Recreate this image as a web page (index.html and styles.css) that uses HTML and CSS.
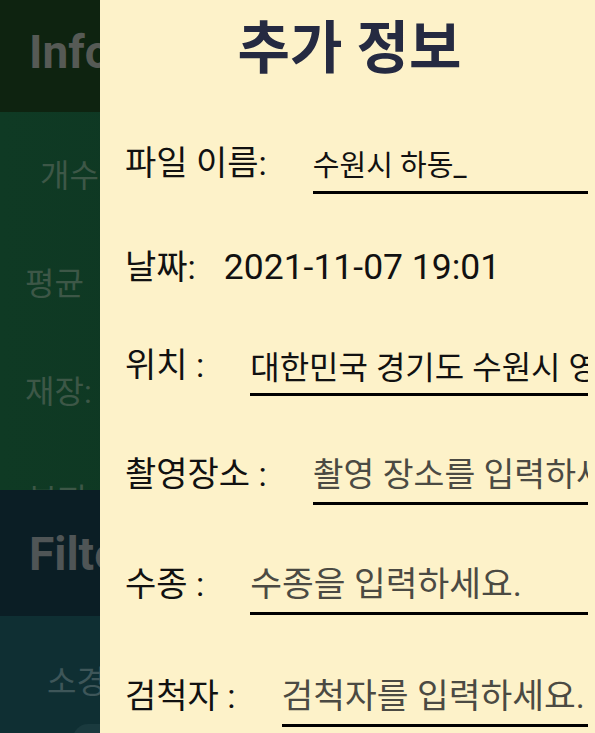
FILE: index.html
```html
<!DOCTYPE html>
<html lang="ko">
<head>
<meta charset="utf-8">
<title>추가 정보</title>
<link rel="stylesheet" href="styles.css">
</head>
<body>
<div class="screen">
  <main class="app">
    <section class="panel-head panel-head--info">
      <h2 class="panel-title">Information</h2>
    </section>
    <section class="panel-body panel-body--info">
      <p class="stat stat--first">개수:</p>
      <p class="stat">평균</p>
      <p class="stat">재장:</p>
      <p class="stat stat--cut">부피:</p>
    </section>
    <section class="panel-head panel-head--filter">
      <h2 class="panel-title">Filter</h2>
    </section>
    <section class="panel-body panel-body--filter">
      <p class="stat stat--filter">소경</p>
      <div class="chip"></div>
    </section>
  </main>

  <aside class="drawer">
    <h1 class="drawer-title">추가 정보</h1>
    <form class="form">
      <label class="row row--file">
        <span class="row-label">파일 이름:</span>
        <input class="field field--small" type="text" value="수원시 하동_">
      </label>
      <div class="row row--date">
        <span class="row-label">날짜:</span>
        <span class="date">2021-11-07 19:01</span>
      </div>
      <label class="row row--place">
        <span class="row-label">위치 :</span>
        <input class="field field--value" type="text" value="대한민국 경기도 수원시 영통구 하동">
      </label>
      <label class="row row--spot">
        <span class="row-label">촬영장소 :</span>
        <input class="field field--compact" type="text" placeholder="촬영 장소를 입력하세요.">
      </label>
      <label class="row row--species">
        <span class="row-label">수종 :</span>
        <input class="field" type="text" placeholder="수종을 입력하세요.">
      </label>
      <label class="row row--checker">
        <span class="row-label">검척자 :</span>
        <input class="field" type="text" placeholder="검척자를 입력하세요.">
      </label>
    </form>
  </aside>
</div>
</body>
</html>
```

FILE: styles.css
```css
* {
  box-sizing: border-box;
  margin: 0;
  padding: 0;
}

html, body {
  width: 595px;
  height: 733px;
  overflow: hidden;
}

body {
  font-family: Roboto, "Noto Sans CJK KR", sans-serif;
}

.screen {
  position: relative;
  width: 595px;
  height: 733px;
  overflow: hidden;
}

/* ---------- underlying app (dimmed) ---------- */
.app {
  display: flex;
  flex-direction: column;
  height: 100%;
}

.panel-head {
  flex: none;
  padding-left: 29px;
}

.panel-head--info {
  height: 112px;
  padding-top: 29px;
  background: #0e2310;
}

.panel-head--filter {
  height: 126px;
  padding-top: 41px;
  background: #0b1e25;
}

.panel-title {
  font: 700 46px/46px Roboto, sans-serif;
  color: #565a55;
  white-space: nowrap;
}

.panel-head--filter .panel-title {
  color: #4f5556;
}

.panel-body {
  overflow: hidden;
}

.panel-body--info {
  flex: none;
  height: 378px;
  display: flex;
  flex-direction: column;
  gap: 76px;
  padding: 48px 0 0 25px;
  background: linear-gradient(90deg, #0f3a24, #0d3220);
}

.panel-body--filter {
  flex: 1;
  padding: 50px 0 0 47px;
  background: #0f2f33;
}

.stat {
  flex: none;
  font: 400 32px/32px Roboto, "Noto Sans CJK KR", sans-serif;
  color: #3d5747;
  white-space: nowrap;
}

.stat--first {
  padding-left: 15px;
}

.stat--cut {
  padding-left: 3px;
}

.stat--filter {
  color: #3e5659;
}

.chip {
  width: 60px;
  height: 30px;
  border-radius: 15px;
  margin: 26px 0 0 26px;
  background: #1a3a3e;
}

/* ---------- drawer ---------- */
.drawer {
  position: absolute;
  top: 0;
  left: 100px;
  right: 0;
  bottom: 0;
  padding: 20px 7px 0 25px;
  background: #fdf2c9;
  color: #111;
}

.drawer-title {
  font: 700 57px/57px Roboto, "Noto Sans CJK KR", sans-serif;
  color: #252a41;
  text-align: center;
  padding-right: 14px;
  white-space: nowrap;
}

.form {
  display: flex;
  flex-direction: column;
}

.row {
  display: flex;
  align-items: flex-start;
}

.row-label {
  flex: none;
  font-size: 34px;
  line-height: 34px;
  white-space: nowrap;
}

.field {
  flex: 1;
  min-width: 0;
  height: 48px;
  margin-left: 46px;
  padding: 0 0 11px;
  border: 0;
  border-bottom: 3px solid #000;
  border-radius: 0;
  background: transparent;
  font-family: Roboto, "Noto Sans CJK KR", sans-serif;
  font-size: 34.5px;
  line-height: 34px;
  color: #111;
  outline: none;
}

.field::placeholder {
  color: #4b4a43;
  opacity: 1;
}

.field--small {
  font-size: 29px;
}

.field--value {
  font-size: 32px;
}

.field--compact {
  font-size: 33.5px;
}

.row--file { margin-top: 69px; }

.row--date {
  margin-top: 56px;
  align-items: baseline;
}

.date {
  margin-left: 28px;
  font-size: 35.5px;
  line-height: 34px;
  white-space: nowrap;
}

.row--place { margin-top: 64px; }
.row--spot { margin-top: 61px; }
.row--species { margin-top: 62px; }
.row--checker { margin-top: 64px; }
```
